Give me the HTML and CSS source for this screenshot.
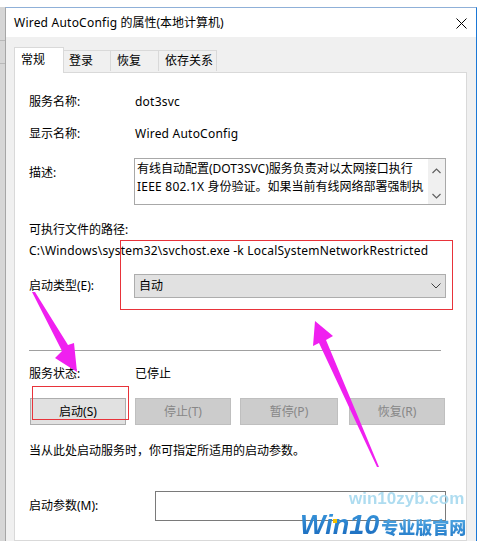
FILE: index.html
```html
<!DOCTYPE html>
<html lang="zh-CN">
<head>
<meta charset="utf-8">
<title>Wired AutoConfig 的属性(本地计算机)</title>
<link rel="stylesheet" href="styles.css">
</head>
<body>
<div class="screen">
  <div class="backwin">
    <div class="bw-line bw-l1"></div>
    <div class="bw-line bw-l2"></div>
  </div>
  <div class="dialog">
    <div class="titlebar">
      <span class="title"><span class="lat">Wired AutoConfig</span> 的属性(本地计算机)</span>
      <svg class="close" width="11" height="11" viewBox="0 0 11 11"><path d="M0.5 0.5 L10.5 10.5 M10.5 0.5 L0.5 10.5" stroke="#000" stroke-width="1" fill="none"/></svg>
    </div>
    <div class="body">
      <div class="tabs">
        <div class="tab active">常规</div>
        <div class="tab t2">登录</div>
        <div class="tab t3">恢复</div>
        <div class="tab t4">依存关系</div>
      </div>
      <div class="panel">
        <div class="row r1"><span class="lbl">服务名称:</span><span class="val lat">dot3svc</span></div>
        <div class="row r2"><span class="lbl">显示名称:</span><span class="val lat">Wired AutoConfig</span></div>
        <div class="row rdesc">
          <span class="lbl lbl-desc">描述:</span>
          <div class="textarea">
            <div class="ta-text">
              <div class="ta-line">有线自动配置(DOT3SVC)服务负责对以太网接口执行</div>
              <div class="ta-line"><span class="lat">IEEE 802.1X</span> 身份验证。如果当前有线网络部署强制执</div>
            </div>
            <div class="ta-scroll">
              <svg width="9" height="6" viewBox="0 0 9 6"><path d="M0.5 5 L4.5 1 L8.5 5" stroke="#606060" stroke-width="1.2" fill="none"/></svg>
              <svg width="9" height="6" viewBox="0 0 9 6"><path d="M0.5 1 L4.5 5 L8.5 1" stroke="#606060" stroke-width="1.2" fill="none"/></svg>
            </div>
          </div>
        </div>
        <div class="pathlbl">可执行文件的路径:</div>
        <div class="path lat">C:\Windows\system32\svchost.exe -k LocalSystemNetworkRestricted</div>
        <div class="row rtype">
          <span class="lbl lbl-box">启动类型(E):</span>
          <div class="select">
            <span>自动</span>
            <svg width="10" height="6" viewBox="0 0 10 6"><path d="M0.5 0.5 L5 5 L9.5 0.5" stroke="#404040" stroke-width="1" fill="none"/></svg>
          </div>
        </div>
        <div class="sep"></div>
        <div class="row rstatus"><span class="lbl">服务状态:</span><span class="val">已停止</span></div>
        <div class="buttons">
          <div class="btn">启动(S)</div>
          <div class="btn disabled">停止(T)</div>
          <div class="btn disabled wide">暂停(P)</div>
          <div class="btn disabled last">恢复(R)</div>
        </div>
        <div class="hint">当从此处启动服务时，你可指定所适用的启动参数。</div>
        <div class="row rparam">
          <span class="lbl lbl-param">启动参数(M):</span>
          <div class="input"></div>
        </div>
      </div>
    </div>
  </div>
</div>

<svg class="overlay" width="477" height="541" viewBox="0 0 477 541">
  <rect x="120.5" y="240.5" width="332" height="69" fill="none" stroke="#e8333a" stroke-width="1"/>
  <rect x="32.5" y="386.5" width="96" height="33" fill="none" stroke="#e8333a" stroke-width="1"/>
  <polygon points="32,292 35,292 68,345 74,343 77,372 55,358 62,351" fill="#f020f0"/>
  <polygon points="315,321 333,336 326,340 379,467 377,467 319,343 313,346" fill="#f020f0"/>
</svg>

<div class="wm-url">win10zyb.com</div>
<div class="wm-brand"><span class="wm-win">Win10</span><span class="wm-cn">专业版官网</span></div>
<div class="wm-dot"></div>
</body>
</html>
```

FILE: styles.css
```css
html, body {
  margin: 0;
  padding: 0;
}

body {
  width: 477px;
  height: 541px;
  overflow: hidden;
  position: relative;
  background: #ffffff;
  font-family: "Noto Sans", "Noto Sans CJK SC", sans-serif;
  font-size: 12px;
  color: #000000;
}

.lat {
  letter-spacing: 0.22px;
}

.screen {
  display: flex;
  padding-top: 7px;
  height: 534px;
}

.backwin {
  width: 5px;
  background: #d6d6d6;
  position: relative;
  display: flex;
  flex-direction: column;
}

.bw-line {
  height: 1px;
  background: #b8b8b8;
}

.bw-l1 {
  margin-top: 33px;
}

.bw-l2 {
  margin-top: 22px;
}

.dialog {
  width: 470px;
  border-top: 1px solid #8fb0d8;
  border-left: 1px solid #a6a6a6;
  border-right: 1px solid #1b78d6;
  display: flex;
  flex-direction: column;
}

.titlebar {
  height: 29px;
  background: #ffffff;
  display: flex;
  align-items: center;
  padding-left: 8px;
  padding-right: 9px;
}

.title {
  font-size: 12px;
  line-height: 16px;
  margin-top: 1px;
}

.close {
  margin-left: auto;
  margin-top: 1px;
}

.body {
  flex: 1;
  background: #f0f0f0;
  padding: 10px 9px 0 8px;
  display: flex;
  flex-direction: column;
}

.tabs {
  display: flex;
  align-items: flex-end;
  height: 25px;
  position: relative;
  z-index: 2;
}

.tab {
  box-sizing: border-box;
  height: 21px;
  line-height: 20px;
  padding-left: 5px;
  border-top: 1px solid #d9d9d9;
  border-right: 1px solid #d9d9d9;
  background: #f0f0f0;
  margin-bottom: 1px;
}

.tab.active {
  width: 50px;
  height: 26px;
  line-height: 23px;
  padding-left: 6px;
  border-left: 1px solid #d9d9d9;
  background: #ffffff;
  margin-bottom: -1px;
}

.tab.t2 {
  width: 47px;
}

.tab.t3 {
  width: 48px;
  padding-left: 6px;
}

.tab.t4 {
  width: 58px;
  padding-left: 6px;
}

.panel {
  flex: 1;
  background: #ffffff;
  border: 1px solid #d9d9d9;
  padding: 21px 0 0 14px;
  display: flex;
  flex-direction: column;
}

.row {
  display: flex;
  align-items: center;
  line-height: 16px;
}

.lbl {
  width: 106px;
  flex: none;
}

.lbl-box {
  width: 105px;
}

.r2 {
  margin-top: 16px;
}

.rdesc {
  margin-top: 16px;
  align-items: flex-start;
}

.lbl-desc {
  width: 105px;
  padding-top: 7px;
}

.textarea {
  box-sizing: border-box;
  width: 312px;
  height: 47px;
  border: 1px solid #a8a8a8;
  display: flex;
  overflow: hidden;
}

.ta-text {
  flex: 1;
  overflow: hidden;
  padding: 1px 0 0 2px;
  line-height: 18px;
}

.ta-line {
  white-space: nowrap;
}

.ta-scroll {
  width: 17px;
  background: #f0f0f0;
  display: flex;
  flex-direction: column;
  align-items: center;
  justify-content: space-between;
  padding: 9px 0 5px;
}

.pathlbl {
  margin-top: 17px;
  line-height: 16px;
}

.path {
  margin-top: 5px;
  line-height: 16px;
  white-space: nowrap;
}

.rtype {
  margin-top: 15px;
}

.select {
  box-sizing: border-box;
  width: 312px;
  height: 24px;
  background: #e1e1e1;
  border: 1px solid #adadad;
  display: flex;
  align-items: center;
  justify-content: space-between;
  padding: 0 4px 0 4px;
}

.sep {
  margin-top: 52px;
  width: 412px;
  height: 1px;
  background: #a0a0a0;
}

.rstatus {
  margin-top: 15px;
}

.buttons {
  margin-top: 16px;
  display: flex;
  gap: 9px;
  margin-left: 1px;
}

.btn {
  box-sizing: border-box;
  width: 96px;
  height: 27px;
  line-height: 25px;
  text-align: center;
  background: #e1e1e1;
  border: 1px solid #adadad;
}

.btn.disabled {
  background: #cccccc;
  border-color: #bfbfbf;
  color: #878787;
}

.btn.wide {
  width: 98px;
}

.btn.last {
  margin-left: 2px;
}

.hint {
  margin-top: 18px;
  line-height: 16px;
}

.rparam {
  margin-top: 32px;
}

.lbl-param {
  width: 126px;
}

.input {
  box-sizing: border-box;
  width: 291px;
  height: 30px;
  border: 1px solid #7a7a7a;
  background: #ffffff;
}

.overlay {
  position: absolute;
  left: 0;
  top: 0;
  pointer-events: none;
}

.wm-url {
  position: absolute;
  left: 349px;
  top: 489px;
  font-family: "Liberation Sans", sans-serif;
  font-weight: bold;
  font-size: 17px;
  color: #a6d9ef;
  opacity: 0.9;
}

.wm-brand {
  position: absolute;
  left: 300px;
  top: 510px;
  display: flex;
  align-items: baseline;
  white-space: nowrap;
}

.wm-win {
  font-family: "Liberation Sans", sans-serif;
  font-weight: bold;
  font-style: italic;
  font-size: 27px;
  background: linear-gradient(to bottom, #3b98dc, #1666bb);
  -webkit-background-clip: text;
  background-clip: text;
  color: transparent;
}

.wm-cn {
  font-family: "Noto Sans CJK SC", sans-serif;
  font-weight: 900;
  font-size: 17px;
  margin-left: 2px;
  background: linear-gradient(to bottom, #5ab0e6, #2078c8);
  -webkit-background-clip: text;
  background-clip: text;
  color: transparent;
}

.wm-dot {
  position: absolute;
  left: 333px;
  top: 519px;
  width: 4px;
  height: 4px;
  background: #f5c000;
}
```
